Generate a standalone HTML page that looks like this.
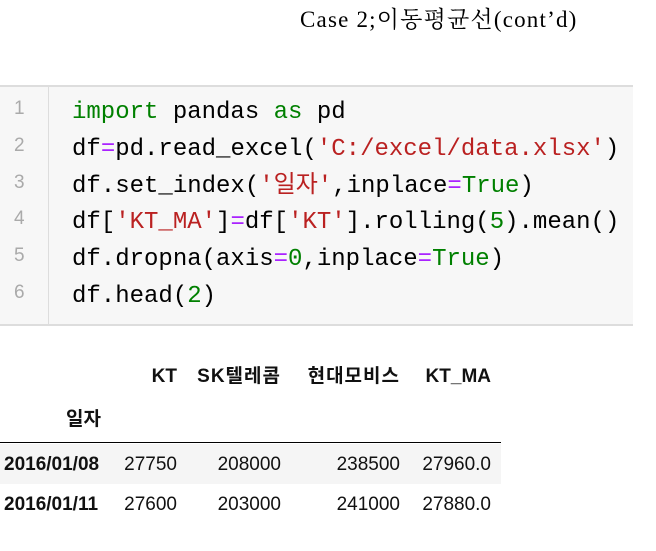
<!DOCTYPE html>
<html><head><meta charset="utf-8"><style>
body{margin:0;width:656px;height:551px;background:#fff;position:relative;overflow:hidden}
.t{position:absolute;left:300px;top:5px;font:23px/30px "Liberation Serif","Noto Serif CJK SC",serif;color:#000;white-space:nowrap;letter-spacing:1.2px}
.code{position:absolute;left:0;top:85px;width:633px;height:237px;background:#f7f7f7;border-top:2px solid #ddd;border-bottom:2px solid #ddd}
.gut{position:absolute;left:48px;top:0;bottom:0;border-left:1px solid #ddd}
.ln{position:absolute;left:14px;font:19px "Liberation Sans",sans-serif;color:#aaa}
.cl{position:absolute;left:72px;font:24px "Liberation Mono","Noto Sans CJK KR",monospace;color:#000;white-space:pre;line-height:28px}
.k{color:#008000}.s{color:#ba2121}.o{color:#aa22ff}.n{color:#008000}
.tx{position:absolute;font:19px/22px "Liberation Sans","Noto Sans CJK KR",sans-serif;color:#111;white-space:nowrap;text-align:right}
.b{font-weight:bold}
.kr{letter-spacing:1px}
</style></head><body>
<div class="t">Case 2;이동평균선(cont’d)</div>
<div class="code"><div class="gut"></div>
<div class="ln" style="top:11px">1</div><div class="ln" style="top:48px">2</div><div class="ln" style="top:85px">3</div><div class="ln" style="top:121px">4</div><div class="ln" style="top:158px">5</div><div class="ln" style="top:195px">6</div>
<div class="cl" style="top:12px"><span class="k">import</span> pandas <span class="k">as</span> pd</div>
<div class="cl" style="top:49px">df<span class="o">=</span>pd.read_excel(<span class="s">'C:/excel/data.xlsx'</span>)</div>
<div class="cl" style="top:86px">df.set_index(<span class="s">'일자'</span>,inplace<span class="o">=</span><span class="k">True</span>)</div>
<div class="cl" style="top:122px">df[<span class="s">'KT_MA'</span>]<span class="o">=</span>df[<span class="s">'KT'</span>].rolling(<span class="n">5</span>).mean()</div>
<div class="cl" style="top:159px">df.dropna(axis<span class="o">=</span><span class="n">0</span>,inplace<span class="o">=</span><span class="k">True</span>)</div>
<div class="cl" style="top:196px">df.head(<span class="n">2</span>)</div>
</div>
<div class="tx b" style="right:479px;top:366px">KT</div>
<div class="tx b kr" style="right:375px;top:366px">SK텔레콤</div>
<div class="tx b kr" style="right:256px;top:366px">현대모비스</div>
<div class="tx b" style="right:165px;top:366px">KT_MA</div>
<div class="tx b" style="right:555px;top:409px">일자</div>
<div style="position:absolute;left:0;top:442px;width:501px;height:1px;background:#000"></div>
<div style="position:absolute;left:0;top:444px;width:501px;height:40px;background:#f5f5f5"></div>
<div class="tx b" style="left:4px;top:454px">2016/01/08</div>
<div class="tx" style="right:479px;top:454px">27750</div>
<div class="tx" style="right:375px;top:454px">208000</div>
<div class="tx" style="right:256px;top:454px">238500</div>
<div class="tx" style="right:165px;top:454px">27960.0</div>
<div class="tx b" style="left:4px;top:494px">2016/01/11</div>
<div class="tx" style="right:479px;top:494px">27600</div>
<div class="tx" style="right:375px;top:494px">203000</div>
<div class="tx" style="right:256px;top:494px">241000</div>
<div class="tx" style="right:165px;top:494px">27880.0</div>
</body></html>
